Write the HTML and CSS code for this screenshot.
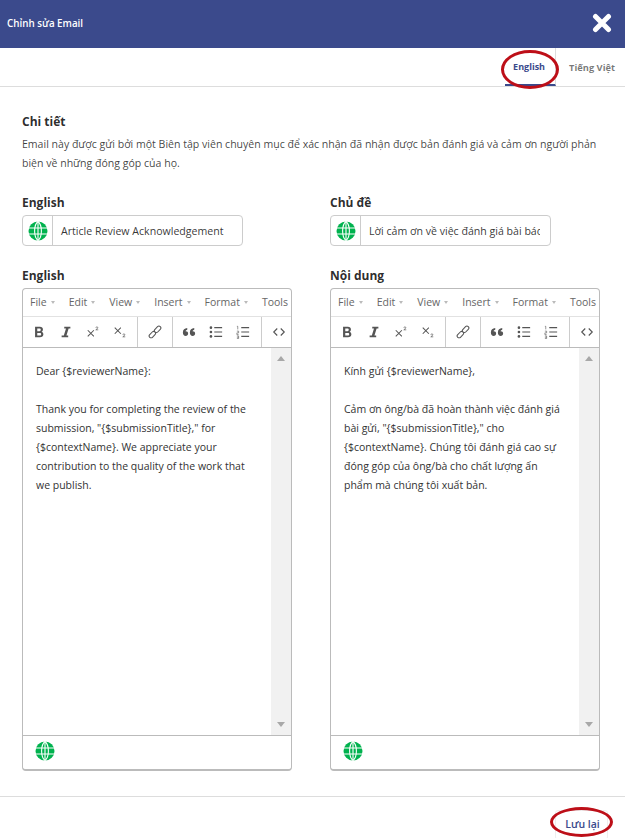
FILE: index.html
```html
<!DOCTYPE html>
<html lang="vi">
<head>
    <meta charset="UTF-8">
    <meta name="viewport" content="width=device-width, initial-scale=1.0">
    <title>Chỉnh sửa Email</title>
    <link rel="stylesheet" href="styles.css">
</head>
<body>
    <svg class="defs" width="0" height="0">
        <symbol id="globe" viewBox="0 0 20 20">
            <circle cx="10" cy="10" r="9.5" fill="#00b24e"/>
            <path d="M0.5 7H19.5M0.5 13H19.5M10 0.5V19.5" stroke="#fff" stroke-width="1.1" fill="none"/>
            <path d="M10 0.5C5.5 4 5.5 16 10 19.5M10 0.5C14.5 4 14.5 16 10 19.5" stroke="#fff" stroke-width="1.1" fill="none"/>
        </symbol>
        <symbol id="bold" viewBox="0 0 16 16">
            <path d="M3.5 2H9c2.2 0 3.5 1.2 3.5 3 0 1.2-.7 2.2-1.7 2.6 1.4.4 2.2 1.5 2.2 2.9 0 2.1-1.5 3.5-3.9 3.5H3.5zM6 4v3h2.6C9.500 7 10 6.400 10 5.500S9.500 4 8.600 4zM6 9v3h3c1 0 1.500-.6 1.500-1.500S10 9 9 9z" fill="#555"/>
        </symbol>
        <symbol id="italic" viewBox="0 0 16 16">
            <path d="M6 2H13V4H11L8.500 12H10.500V14H3V12H5.500L8 4H6z" fill="#555"/>
        </symbol>
        <symbol id="sup" viewBox="0 0 16 16">
            <path d="M2 6L9 13M9 6L2 13" stroke="#555" stroke-width="1.200" fill="none"/>
            <path d="M11 3.200C11.500 1.800 14 2 13.500 3.500L11.200 5.500H14" stroke="#555" stroke-width=".8" fill="none"/>
        </symbol>
        <symbol id="sub" viewBox="0 0 16 16">
            <path d="M2 3L9 10M9 3L2 10" stroke="#555" stroke-width="1.200" fill="none"/>
            <path d="M11 11.200C11.500 9.800 14 10 13.500 11.500L11.200 13.500H14" stroke="#555" stroke-width=".8" fill="none"/>
        </symbol>
        <symbol id="link" viewBox="0 0 16 16">
            <g fill="none" stroke="#555" stroke-width="1.200" transform="rotate(-45 8 8)">
                <rect x="-0.500" y="5.800" width="8.500" height="4.400" rx="2.200"/>
                <rect x="8" y="5.800" width="8.500" height="4.400" rx="2.200"/>
            </g>
        </symbol>
        <symbol id="quote" viewBox="0 0 16 16">
            <path d="M1 8.500C1 5.500 3 3.800 6 3.500V5.300C4.800 5.600 4.200 6.300 4 7.200 5.600 7 7 8 7 9.800 7 11.300 5.800 12.500 4.200 12.500 2.300 12.500 1 11 1 8.500zM9 8.500C9 5.500 11 3.800 14 3.500V5.300C12.800 5.600 12.200 6.300 12 7.200 13.600 7 15 8 15 9.800 15 11.300 13.800 12.500 12.200 12.500 10.300 12.500 9 11 9 8.500z" fill="#555"/>
        </symbol>
        <symbol id="bullets" viewBox="0 0 16 16">
            <circle cx="2.200" cy="3" r="1.500" fill="#555"/>
            <circle cx="2.200" cy="8" r="1.500" fill="#555"/>
            <circle cx="2.200" cy="13" r="1.500" fill="#555"/>
            <path d="M6 3H15M6 8H15M6 13H15" stroke="#555" stroke-width="1.300"/>
        </symbol>
        <symbol id="numbers" viewBox="0 0 16 16">
            <path d="M1 1.500H2V5M1 7H3V9H1V11H3M1 12.500H3V15.500H1M1 14H3" stroke="#555" stroke-width=".7" fill="none"/>
            <path d="M6 3H15M6 8H15M6 13H15" stroke="#555" stroke-width="1.300"/>
        </symbol>
        <symbol id="code" viewBox="0 0 16 16">
            <path d="M6 4L2 8L6 12M10 4L14 8L10 12" stroke="#555" stroke-width="1.300" fill="none"/>
        </symbol>
    </svg>

    <div class="modal">
        <header class="modal-header">
            <h1 class="modal-title">Chỉnh sửa Email</h1>
            <svg class="close-icon" viewBox="0 0 20 20" width="20" height="20">
                <path d="M3.500 3.500L16.500 16.500M16.500 3.500L3.500 16.500" stroke="#fff" stroke-width="5" stroke-linecap="round"/>
            </svg>
        </header>

        <nav class="locale-tabs">
            <div class="tab tab-active">English</div>
            <div class="tab">Tiếng Việt</div>
        </nav>

        <main class="modal-body">
            <h2 class="section-title">Chi tiết</h2>
            <p class="section-desc">Email này được gửi bởi một Biên tập viên chuyên mục để xác nhận đã nhận được bản đánh giá và cảm ơn người phản biện về những đóng góp của họ.</p>

            <div class="form-columns">
                <div class="form-column">
                    <label class="field-label">English</label>
                    <div class="text-input">
                        <span class="input-addon"><svg width="20" height="20"><use href="#globe"/></svg></span>
                        <span class="input-value">Article Review Acknowledgement</span>
                    </div>

                    <label class="field-label field-label-editor">English</label>
                    <div class="editor">
                        <div class="menubar">
                            <span class="menu-item">File<i class="caret"></i></span>
                            <span class="menu-item">Edit<i class="caret"></i></span>
                            <span class="menu-item">View<i class="caret"></i></span>
                            <span class="menu-item">Insert<i class="caret"></i></span>
                            <span class="menu-item">Format<i class="caret"></i></span>
                            <span class="menu-item">Tools</span>
                        </div>
                        <div class="toolbar">
                            <div class="tool-group tool-group-format">
                                <svg class="tool"><use href="#bold"/></svg>
                                <svg class="tool"><use href="#italic"/></svg>
                                <svg class="tool"><use href="#sup"/></svg>
                                <svg class="tool"><use href="#sub"/></svg>
                            </div>
                            <div class="tool-group tool-group-link">
                                <svg class="tool"><use href="#link"/></svg>
                            </div>
                            <div class="tool-group tool-group-blocks">
                                <svg class="tool"><use href="#quote"/></svg>
                                <svg class="tool"><use href="#bullets"/></svg>
                                <svg class="tool"><use href="#numbers"/></svg>
                            </div>
                            <div class="tool-group tool-group-code">
                                <svg class="tool"><use href="#code"/></svg>
                            </div>
                        </div>
                        <div class="editor-main">
                            <div class="editor-content">
                                <p>Dear {$reviewerName}:</p>
                                <p>Thank you for completing the review of the submission, "{$submissionTitle}," for {$contextName}. We appreciate your contribution to the quality of the work that we publish.</p>
                            </div>
                            <div class="scrollbar">
                                <i class="arrow-up"></i>
                                <i class="arrow-down"></i>
                            </div>
                        </div>
                        <div class="statusbar"><svg width="20" height="20"><use href="#globe"/></svg></div>
                    </div>
                </div>

                <div class="form-column">
                    <label class="field-label">Chủ đề</label>
                    <div class="text-input">
                        <span class="input-addon"><svg width="20" height="20"><use href="#globe"/></svg></span>
                        <span class="input-value">Lời cảm ơn về việc đánh giá bài báo</span>
                    </div>

                    <label class="field-label field-label-editor">Nội dung</label>
                    <div class="editor">
                        <div class="menubar">
                            <span class="menu-item">File<i class="caret"></i></span>
                            <span class="menu-item">Edit<i class="caret"></i></span>
                            <span class="menu-item">View<i class="caret"></i></span>
                            <span class="menu-item">Insert<i class="caret"></i></span>
                            <span class="menu-item">Format<i class="caret"></i></span>
                            <span class="menu-item">Tools</span>
                        </div>
                        <div class="toolbar">
                            <div class="tool-group tool-group-format">
                                <svg class="tool"><use href="#bold"/></svg>
                                <svg class="tool"><use href="#italic"/></svg>
                                <svg class="tool"><use href="#sup"/></svg>
                                <svg class="tool"><use href="#sub"/></svg>
                            </div>
                            <div class="tool-group tool-group-link">
                                <svg class="tool"><use href="#link"/></svg>
                            </div>
                            <div class="tool-group tool-group-blocks">
                                <svg class="tool"><use href="#quote"/></svg>
                                <svg class="tool"><use href="#bullets"/></svg>
                                <svg class="tool"><use href="#numbers"/></svg>
                            </div>
                            <div class="tool-group tool-group-code">
                                <svg class="tool"><use href="#code"/></svg>
                            </div>
                        </div>
                        <div class="editor-main">
                            <div class="editor-content">
                                <p>Kính gửi {$reviewerName},</p>
                                <p>Cảm ơn ông/bà đã hoàn thành việc đánh giá bài gửi, "{$submissionTitle}," cho {$contextName}. Chúng tôi đánh giá cao sự đóng góp của ông/bà cho chất lượng ấn phẩm mà chúng tôi xuất bản.</p>
                            </div>
                            <div class="scrollbar">
                                <i class="arrow-up"></i>
                                <i class="arrow-down"></i>
                            </div>
                        </div>
                        <div class="statusbar"><svg width="20" height="20"><use href="#globe"/></svg></div>
                    </div>
                </div>
            </div>
        </main>

        <footer class="modal-footer">
            <button class="save-btn">Lưu lại</button>
        </footer>
    </div>

    <!-- red marks drawn over the screenshot -->
    <div class="mark mark-tab"></div>
    <div class="mark mark-save"></div>
</body>
</html>
```

FILE: styles.css
```css
* {
    box-sizing: border-box;
}

html, body {
    height: 100%;
}

body {
    margin: 0;
    font-family: 'Open Sans', 'Noto Sans', sans-serif;
    color: rgba(0, 0, 0, 0.84);
    background: #fff;
    overflow: hidden;
    position: relative;
}

.defs {
    position: absolute;
}

.modal {
    height: 838px;
    display: flex;
    flex-direction: column;
}

.modal-header {
    height: 48px;
    flex: none;
    background: #3b4a8c;
    display: flex;
    align-items: center;
    justify-content: space-between;
    padding: 0 13px 3px 7px;
}

.modal-title {
    margin: 0 0 -2px;
    font-size: 9.800px;
    font-weight: 600;
    color: #fff;
}

.locale-tabs {
    height: 39px;
    flex: none;
    border-bottom: 1px solid #ddd;
    display: flex;
    justify-content: flex-end;
}

.tab {
    height: 38px;
    padding: 0 10px 0 13px;
    display: flex;
    align-items: center;
    font-size: 9.300px;
    font-weight: 700;
    color: rgba(0, 0, 0, 0.54);
}

.tab-active {
    width: 51px;
    padding: 0 0 0 8px;
    font-size: 9px;
    color: #3b4a8c;
    border-right: 1px solid #ddd;
    border-bottom: 2px solid #3b4a8c;
}

.modal-body {
    flex: 1;
    padding: 27px 22px 0;
}

.section-title {
    margin: 0;
    font-size: 12px;
    line-height: 16px;
    font-weight: 700;
}

.section-desc {
    margin: 5px 0 0;
    font-size: 10.550px;
    line-height: 19px;
    color: rgba(0, 0, 0, 0.75);
}

.form-columns {
    margin-top: 22px;
    display: flex;
    gap: 38px;
}

.form-column {
    width: 270px;
}

.field-label {
    display: block;
    font-size: 12px;
    line-height: 16px;
    font-weight: 700;
    margin-bottom: 4px;
}

.field-label-editor {
    margin-top: 22px;
}

.text-input {
    width: 221px;
    height: 31px;
    border: 1px solid #ccc;
    border-radius: 4px;
    display: flex;
    align-items: center;
}

.input-addon {
    width: 30px;
    height: 100%;
    flex: none;
    border-right: 1px solid #ccc;
    display: flex;
    align-items: center;
    justify-content: center;
}

.input-value {
    padding-left: 8px;
    width: 179px;
    font-size: 10.600px;
    white-space: nowrap;
    overflow: hidden;
    color: rgba(0, 0, 0, 0.8);
}

.editor {
    height: 483px;
    border: 1px solid #bbb;
    border-bottom-width: 2px;
    border-radius: 4px;
    display: flex;
    flex-direction: column;
    overflow: hidden;
}

.menubar {
    height: 27px;
    flex: none;
    display: flex;
    align-items: center;
    padding: 0 0 2px 7px;
    gap: 14px;
    font-size: 10.500px;
    color: #666;
    white-space: nowrap;
}

.caret {
    display: inline-block;
    margin-left: 4px;
    border-top: 3px solid #bbb;
    border-left: 2.500px solid transparent;
    border-right: 2.500px solid transparent;
    vertical-align: 2px;
}

.toolbar {
    height: 32px;
    flex: none;
    display: flex;
    border-top: 1px solid #e2e2e2;
    border-bottom: 1px solid #bbb;
}

.tool-group {
    display: flex;
    align-items: center;
    border-right: 1px solid #ccc;
}

.tool-group-format {
    width: 115px;
    padding-left: 9px;
    gap: 13px;
}

.tool-group-link {
    width: 35px;
    padding-left: 10px;
}

.tool-group-blocks {
    width: 89px;
    padding-left: 9px;
    gap: 13px;
}

.tool-group-code {
    padding-left: 10px;
    border-right: 0;
}

.tool {
    width: 14px;
    height: 14px;
    flex: none;
}

.editor-main {
    height: 388px;
    flex: none;
    display: flex;
    border-bottom: 1px solid #bbb;
}

.editor-content {
    flex: 1;
    padding: 14px 13px 0 13px;
    font-size: 10.500px;
    line-height: 19px;
    color: #333;
}

.editor-content p {
    margin: 0 0 19px;
}

.scrollbar {
    width: 20px;
    flex: none;
    background: #f1f1f1;
    display: flex;
    flex-direction: column;
    justify-content: space-between;
    align-items: center;
    padding: 8px 0;
}

.arrow-up {
    border-bottom: 5px solid #a8a8a8;
    border-left: 4.500px solid transparent;
    border-right: 4.500px solid transparent;
}

.arrow-down {
    border-top: 5px solid #a8a8a8;
    border-left: 4.500px solid transparent;
    border-right: 4.500px solid transparent;
}

.statusbar {
    flex: 1;
    display: flex;
    align-items: center;
    padding: 0 0 3px 12px;
}

.modal-footer {
    height: 42px;
    flex: none;
    border-top: 1px solid #ddd;
    display: flex;
    justify-content: flex-end;
    padding: 13px 17px 0 0;
}

.save-btn {
    width: 53px;
    height: 30px;
    padding: 0 0 3px 2px;
    background: #fff;
    border: 1px solid #eee;
    border-radius: 3px;
    font-family: inherit;
    font-size: 10.500px;
    font-weight: 600;
    color: #3b4a8c;
}

.mark {
    position: absolute;
    border: 3px solid #bd0f18;
    border-radius: 50%;
}

.mark-tab {
    left: 501px;
    top: 50px;
    width: 58px;
    height: 39px;
}

.mark-save {
    left: 550px;
    top: 807px;
    width: 63px;
    height: 30px;
}
```
